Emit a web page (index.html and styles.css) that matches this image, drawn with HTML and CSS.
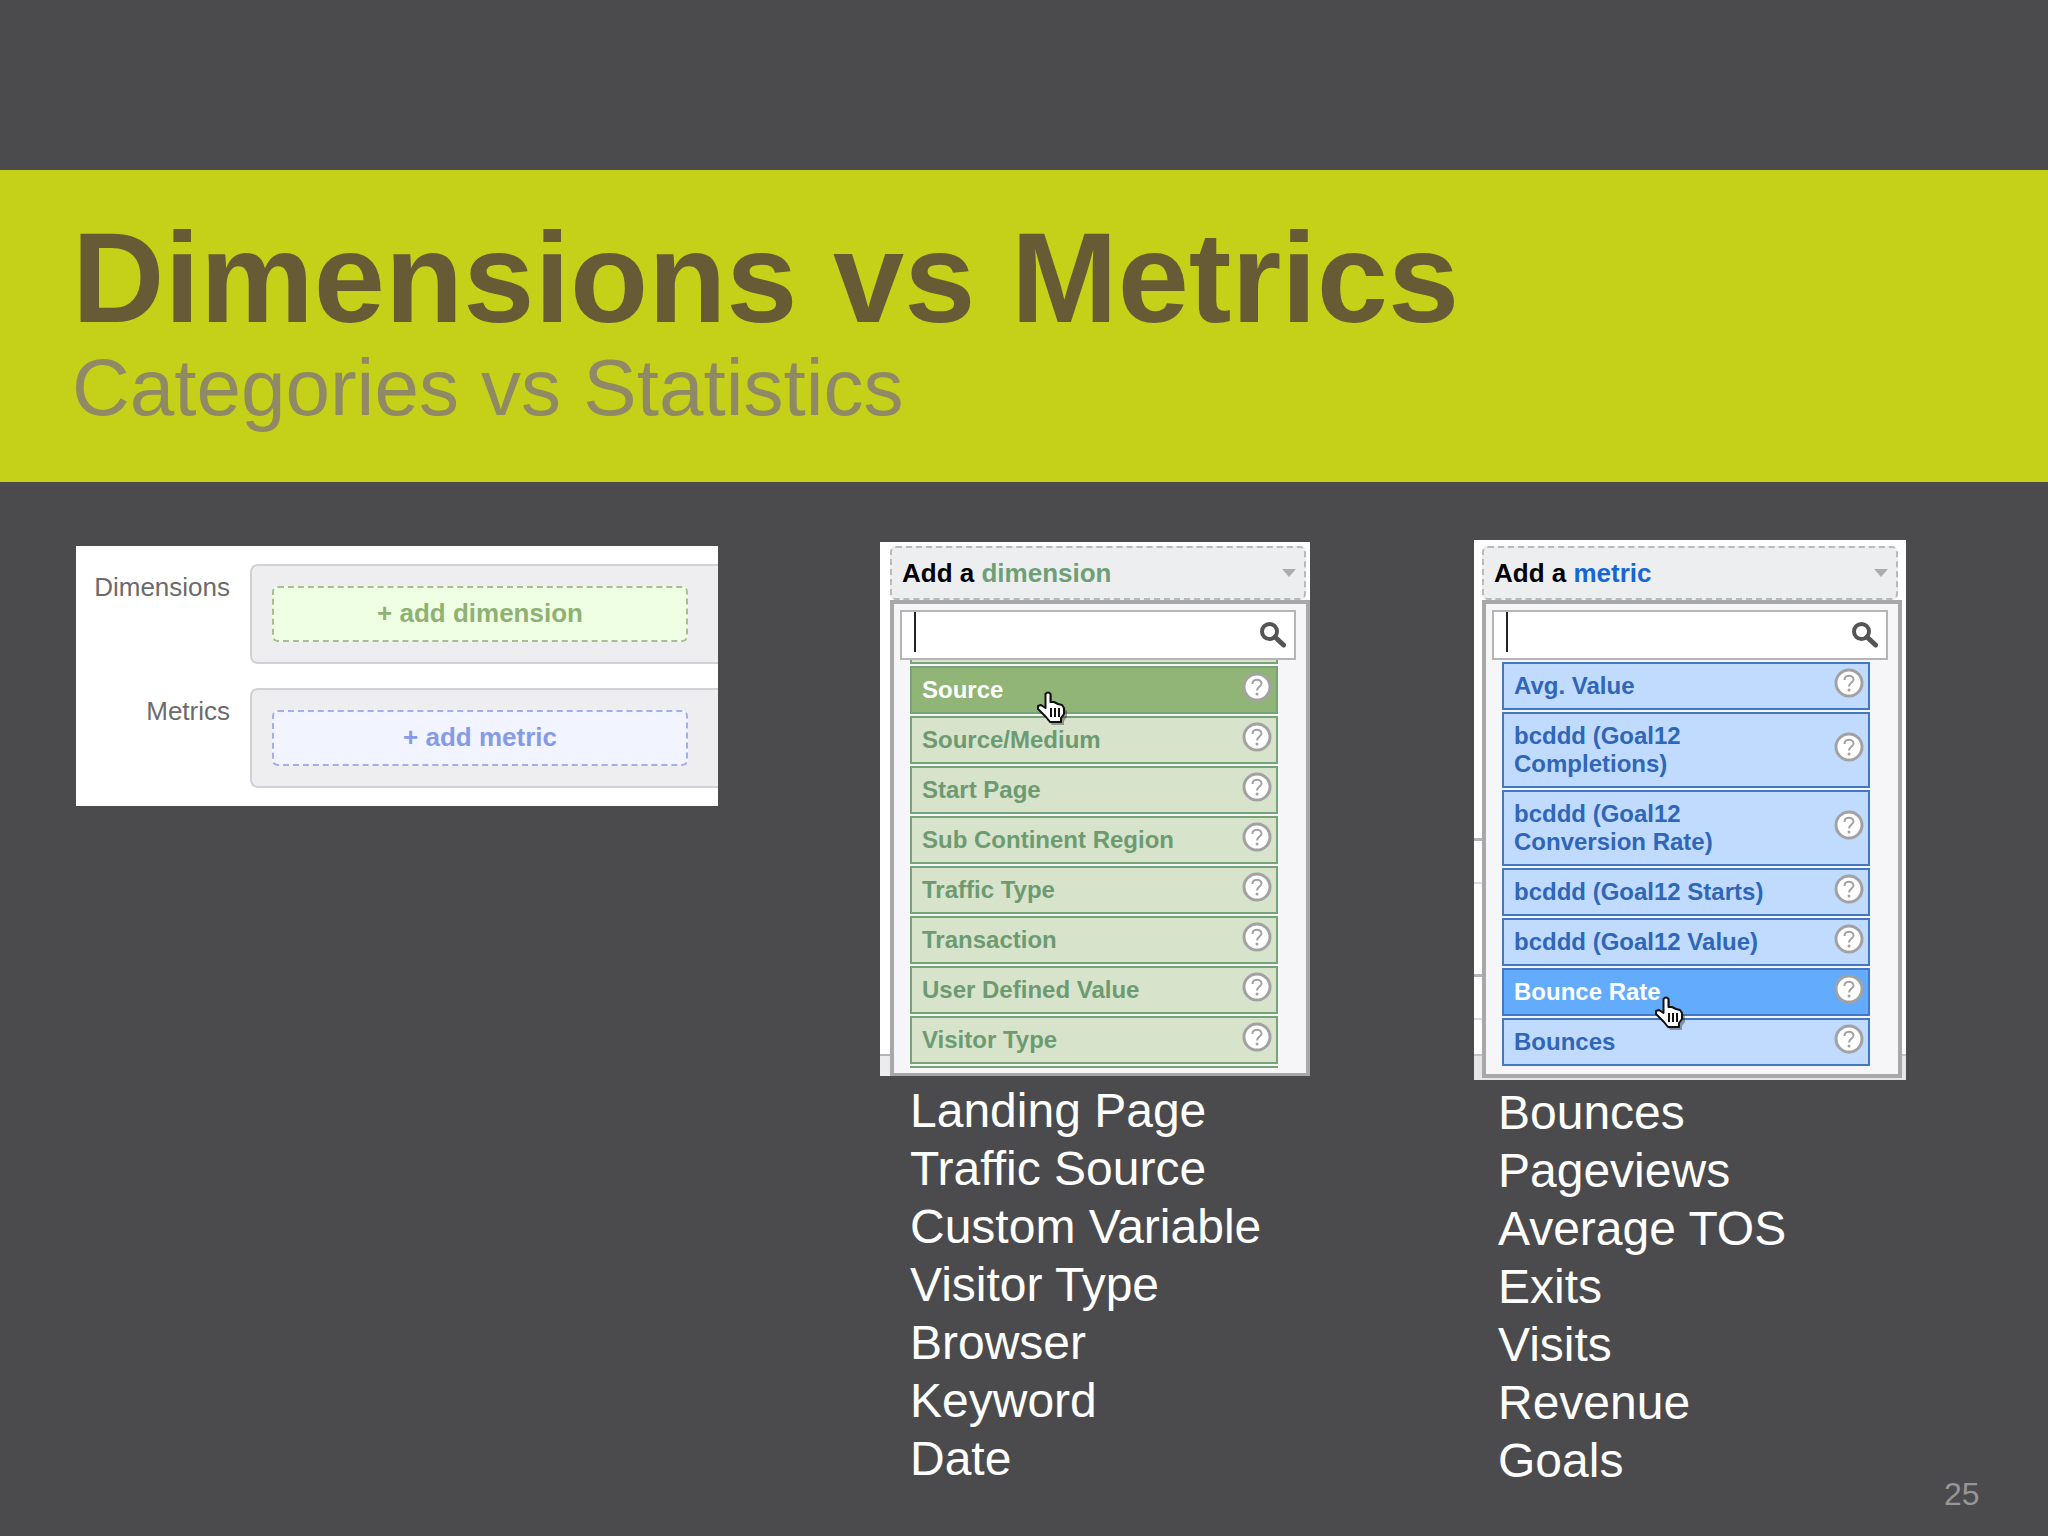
FILE: index.html
```html
<!DOCTYPE html>
<html lang="en">
<head>
<meta charset="utf-8">
<title>Dimensions vs Metrics</title>
<link rel="stylesheet" href="styles.css">
</head>
<body>
<svg class="defs" aria-hidden="true">
  <symbol id="search" viewBox="0 0 26 26">
    <circle cx="9.500" cy="9.500" r="7.500" fill="none" stroke="#555" stroke-width="4"/>
    <path d="M15 15L23.500 23" stroke="#555" stroke-width="5" stroke-linecap="round"/>
  </symbol>
  <symbol id="help" viewBox="0 0 30 30">
    <circle cx="15" cy="15" r="13" fill="#fff" stroke="#a2a2a2" stroke-width="3"/>
    <path d="M10.500 12C10.500 6.500 19.500 6.500 19.500 11.500C19.500 14.500 15 14.500 15 18.500" fill="none" stroke="#a2a2a2" stroke-width="2"/>
    <circle cx="15" cy="22" r="1.500" fill="#a2a2a2"/>
  </symbol>
  <symbol id="hand" viewBox="0 0 32 34">
    <path d="M10 3Q12 0 14 3V12L18 12L22 14L26 15L29 18V24L26 28V32H14L10 27L2 19V16L5 15L10 18Z" fill="#222" opacity=".4" transform="translate(2 2)"/>
    <path d="M9.500 3Q12 0 14.500 3V11L18 11L22 13L26 14L28 17V23L25 27V31H14L10 26L2 18V15L5 14L9.500 17Z" fill="#fff" stroke="#111" stroke-width="2" stroke-linejoin="round"/>
    <path d="M15 17V26M19 17V26M23 17V26" stroke="#111" stroke-width="2"/>
  </symbol>
</svg>
<div class="slide">
  <header class="band">
    <h1>Dimensions vs Metrics</h1>
    <p>Categories vs Statistics</p>
  </header>
  <main>
    <section class="report">
      <div class="report-row">
        <span class="report-label" id="dims">Dimensions</span>
        <div class="slot"><button class="add add-dimension" type="button" aria-describedby="dims">+ add dimension</button></div>
      </div>
      <div class="report-row">
        <span class="report-label" id="mets">Metrics</span>
        <div class="slot"><button class="add add-metric" type="button" aria-describedby="mets">+ add metric</button></div>
      </div>
    </section>

    <section class="column dimensions">
      <div class="shot">
        <button class="picker" type="button"><span>Add a <b>dimension</b></span><i class="arrow"></i></button>
        <div class="menu">
          <label class="search"><i class="caret"></i><input type="text" aria-label="Search dimensions"><svg><use href="#search"/></svg></label>
          <ul class="options">
            <li class="option active">Source<svg class="help"><use href="#help"/></svg><svg class="hand"><use href="#hand"/></svg></li>
            <li class="option">Source/Medium<svg class="help"><use href="#help"/></svg></li>
            <li class="option">Start Page<svg class="help"><use href="#help"/></svg></li>
            <li class="option">Sub Continent Region<svg class="help"><use href="#help"/></svg></li>
            <li class="option">Traffic Type<svg class="help"><use href="#help"/></svg></li>
            <li class="option">Transaction<svg class="help"><use href="#help"/></svg></li>
            <li class="option">User Defined Value<svg class="help"><use href="#help"/></svg></li>
            <li class="option">Visitor Type<svg class="help"><use href="#help"/></svg></li>
          </ul>
        </div>
      </div>
      <ul class="examples">
        <li>Landing Page</li>
        <li>Traffic Source</li>
        <li>Custom Variable</li>
        <li>Visitor Type</li>
        <li>Browser</li>
        <li>Keyword</li>
        <li>Date</li>
      </ul>
    </section>

    <section class="column metrics">
      <div class="shot">
        <button class="picker" type="button"><span>Add a <b>metric</b></span><i class="arrow"></i></button>
        <div class="menu">
          <label class="search"><i class="caret"></i><input type="text" aria-label="Search metrics"><svg><use href="#search"/></svg></label>
          <ul class="options">
            <li class="option">Avg. Value<svg class="help"><use href="#help"/></svg></li>
            <li class="option">bcddd (Goal12 Completions)<svg class="help"><use href="#help"/></svg></li>
            <li class="option">bcddd (Goal12 Conversion Rate)<svg class="help"><use href="#help"/></svg></li>
            <li class="option">bcddd (Goal12 Starts)<svg class="help"><use href="#help"/></svg></li>
            <li class="option">bcddd (Goal12 Value)<svg class="help"><use href="#help"/></svg></li>
            <li class="option active">Bounce Rate<svg class="help"><use href="#help"/></svg><svg class="hand"><use href="#hand"/></svg></li>
            <li class="option">Bounces<svg class="help"><use href="#help"/></svg></li>
          </ul>
        </div>
      </div>
      <ul class="examples">
        <li>Bounces</li>
        <li>Pageviews</li>
        <li>Average TOS</li>
        <li>Exits</li>
        <li>Visits</li>
        <li>Revenue</li>
        <li>Goals</li>
      </ul>
    </section>

    <footer class="page-number">25</footer>
  </main>
</div>
</body>
</html>
```
FILE: styles.css
```css
*, *::before, *::after { box-sizing: border-box; }

body {
  margin: 0;
  background: #4b4b4d;
  color: #fff;
  font-family: "Liberation Sans", Arial, sans-serif;
}

ul { margin: 0; padding: 0; list-style: none; }

button, input { font: inherit; }

.defs { display: none; }

.slide {
  display: flex;
  flex-direction: column;
  min-height: 100vh;
  padding-top: 170px;
}

/* Title band */
.band {
  height: 312px;
  padding: 36px 72px 0;
  background: #c4d118;
}

.band h1 {
  margin: 0;
  font-size: 128px;
  line-height: 144px;
  color: #675b35;
}

.band p {
  margin: 0;
  font-size: 80px;
  line-height: 76px;
  color: #8f8a65;
}

main {
  flex: 1;
  display: grid;
  grid-template-columns: 804fr 594fr 470fr 36px;
  align-items: start;
  padding: 0 68px 0 76px;
}

/* Report editor */
.report {
  display: grid;
  gap: 24px;
  width: 642px;
  margin-top: 64px;
  padding: 18px 0;
  background: #fff;
}

.report-row {
  display: grid;
  grid-template-columns: 154px 1fr;
  column-gap: 20px;
}

.report-label {
  padding-top: 8px;
  font-size: 26px;
  line-height: 30px;
  text-align: right;
  color: #6b6b6d;
}

.slot {
  height: 100px;
  padding: 20px;
  border: 2px solid #d0d2d5;
  border-right: 0;
  border-radius: 8px 0 0 8px;
  background: #eeeef0;
}

.add {
  display: block;
  width: 416px;
  height: 56px;
  padding: 0 0 2px;
  border: 2px dashed;
  border-radius: 6px;
  font-size: 26px;
  font-weight: bold;
}

.add-dimension { border-color: #a9bd92; background: #efffe3; color: #8fb173; }
.add-metric { border-color: #a5aee8; background: #f2f4ff; color: #869be8; }

/* Open pickers */
.dimensions { padding-top: 60px; }
.metrics { padding-top: 58px; }

.shot { background: #fff; }

.dimensions .shot {
  width: 430px;
  height: 534px;
  padding: 4px 0 0 10px;
  background: linear-gradient(#fff 512px, #b4b4b4 512px 514px, #ececee 514px);
}

.metrics .shot {
  width: 432px;
  height: 540px;
  padding: 6px 4px 2px 8px;
  background:
    linear-gradient(#b4b4b4, #b4b4b4) 0 298px / 8px 3px no-repeat,
    linear-gradient(#dcdcdc, #dcdcdc) 0 342px / 8px 2px no-repeat,
    linear-gradient(#b4b4b4, #b4b4b4) 0 434px / 8px 3px no-repeat,
    linear-gradient(#dcdcdc, #dcdcdc) 0 478px / 8px 2px no-repeat,
    linear-gradient(#fff 514px, #c4c4c4 514px 516px, #e6e6e8 516px);
}

.picker {
  display: flex;
  align-items: center;
  justify-content: space-between;
  width: 416px;
  height: 54px;
  padding: 0 8px 0 10px;
  border: 2px dashed #b9b9bb;
  border-radius: 6px;
  background: #edeef0;
  color: #000;
  font-size: 26px;
  font-weight: bold;
}

.picker b { color: #6e9f76; }
.metrics .picker b { color: #1766d2; }

.arrow {
  border: 7px solid transparent;
  border-top: 8px solid #adadaf;
  border-bottom: 0;
}

.menu {
  width: 420px;
  height: 478px;
  padding: 6px 10px 0 6px;
  border: 4px solid #a8a8aa;
  background: #f6f6f9;
}

.dimensions .menu { height: 476px; border-bottom-width: 3px; }

.search {
  display: flex;
  align-items: center;
  height: 50px;
  padding: 0 8px 0 12px;
  border: 2px solid #b5b5b7;
  background: #fff;
}

.search input {
  flex: 1;
  min-width: 0;
  height: 40px;
  border: 0;
  padding: 0 4px;
  background: none;
  font-size: 24px;
}

.search svg { width: 26px; height: 26px; }

.caret {
  align-self: flex-start;
  width: 2px;
  height: 40px;
  background: #222;
}

.options {
  display: grid;
  gap: 2px;
  width: 368px;
  margin-left: 10px;
  padding-top: 2px;
}

/* Edges of the options scrolled out of the list */
.dimensions .options { padding-top: 0; }

.dimensions .options::before,
.dimensions .options::after {
  content: "";
  height: 4px;
  border: 2px solid #76a378;
  border-top: 0;
  background: #d8e3cb;
}

.dimensions .options::after { height: 2px; }

.option {
  position: relative;
  display: flex;
  align-items: center;
  justify-content: space-between;
  min-height: 48px;
  padding: 8px 4px 8px 10px;
  border: 2px solid #76a378;
  background: #d8e3cb;
  color: #6c9b72;
  font-size: 24px;
  font-weight: bold;
  line-height: 28px;
}

.dimensions .active { background: #90b577; color: #fff; }

.metrics .option { border-color: #4377c2; background: #c1dbff; color: #2f66b8; }
.metrics .active { background: #62abfd; color: #fff; }

.help {
  flex: none;
  width: 30px;
  height: 30px;
  margin: -4px 0 2px 32px;
}

.hand {
  position: absolute;
  z-index: 1;
  top: 23px;
  left: 124px;
  width: 32px;
  height: 34px;
}

.metrics .hand { top: 26px; left: 150px; }

/* Example lists */
.examples {
  margin: 6px 0 0 30px;
  font-size: 48px;
  line-height: 58px;
}

.metrics .examples { margin: 4px 0 0 24px; }

.page-number {
  align-self: end;
  padding-bottom: 24px;
  font-size: 32px;
  line-height: 36px;
  color: #969698;
}
```
